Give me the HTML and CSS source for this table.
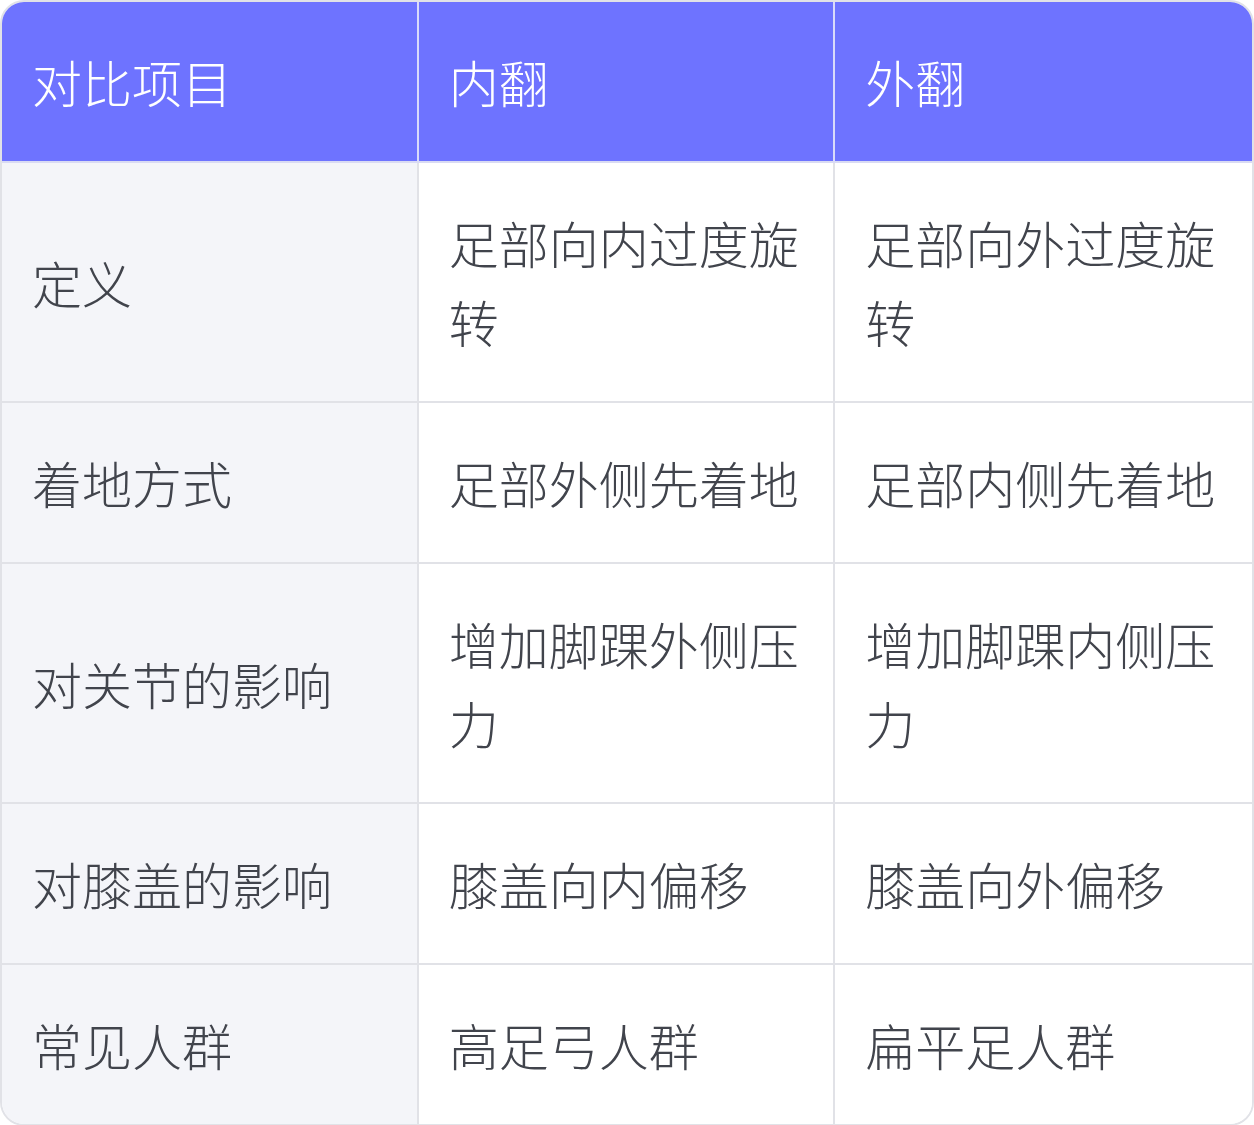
FILE: index.html
```html
<!DOCTYPE html>
<html lang="zh-CN">
<head>
<meta charset="utf-8">
<title>内翻与外翻对比</title>
<link rel="stylesheet" href="styles.css">
</head>
<body>
<table class="cmp">
  <thead>
    <tr><th>对比项目</th><th>内翻</th><th>外翻</th></tr>
  </thead>
  <tbody>
    <tr><td class="key">定义</td><td>足部向内过度旋转</td><td>足部向外过度旋转</td></tr>
    <tr><td class="key">着地方式</td><td>足部外侧先着地</td><td>足部内侧先着地</td></tr>
    <tr><td class="key">对关节的影响</td><td>增加脚踝外侧压力</td><td>增加脚踝内侧压力</td></tr>
    <tr><td class="key">对膝盖的影响</td><td>膝盖向内偏移</td><td>膝盖向外偏移</td></tr>
    <tr><td class="key">常见人群</td><td>高足弓人群</td><td>扁平足人群</td></tr>
  </tbody>
</table>
</body>
</html>
```
FILE: styles.css
```css
html, body {
  margin: 0;
  padding: 0;
  background: #ffffff;
}
.cmp {
  width: 1254px;
  box-sizing: border-box;
  table-layout: fixed;
  border-collapse: separate;
  border-spacing: 0;
  border: 2px solid #e1e2e7;
  border-radius: 24px;
  overflow: hidden;
  font-family: "Noto Sans CJK SC", "Noto Sans", sans-serif;
  font-size: 50px;
  line-height: 79px;
  color: #41444c;
}
.cmp th, .cmp td {
  padding: 40px 28px 40px 30px;
  text-align: left;
  vertical-align: middle;
  font-weight: 300;
  border-right: 2px solid #e1e2e7;
  border-bottom: 2px solid #e1e2e7;
}
.cmp th:last-child, .cmp td:last-child {
  border-right: none;
}
.cmp tbody tr:last-child td {
  border-bottom: none;
}
.cmp th {
  background: #6e73ff;
  color: #ffffff;
  border-right-color: #d9dafa;
  border-bottom-color: #d9dbf3;
}
.cmp td {
  background: #ffffff;
}
.cmp td.key {
  background: #f4f5f9;
}
```
